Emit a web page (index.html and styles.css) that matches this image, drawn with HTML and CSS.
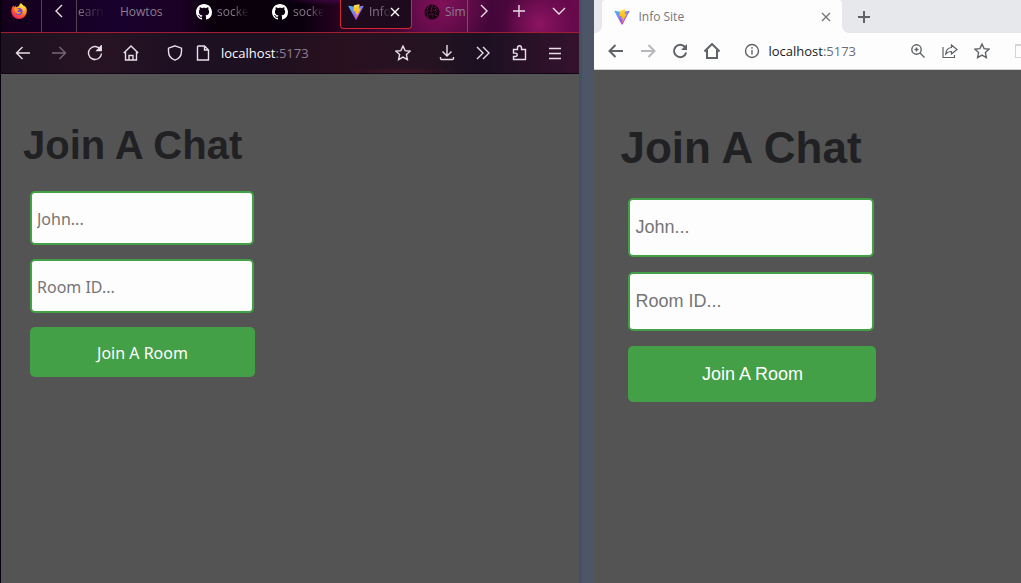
FILE: index.html
```html
<!DOCTYPE html>
<html lang="en">
<head>
<meta charset="utf-8">
<title>Info Site</title>
<link rel="stylesheet" href="styles.css">
</head>
<body>
<svg class="defs" width="0" height="0" aria-hidden="true">
  <defs>
    <linearGradient id="vg" x1="0" y1="0" x2="0.6" y2="1"><stop offset="0" stop-color="#41c0f5"/><stop offset="1" stop-color="#bd34fe"/></linearGradient>
    <linearGradient id="vb" x1="0.4" y1="0" x2="0.6" y2="1"><stop offset="0" stop-color="#ffea83"/><stop offset="0.2" stop-color="#ffcf30"/><stop offset="1" stop-color="#ffa800"/></linearGradient>
    <radialGradient id="ff" cx="0.75" cy="0.15" r="0.95"><stop offset="0" stop-color="#fff04a"/><stop offset="0.45" stop-color="#ff9a20"/><stop offset="0.75" stop-color="#ff4a3c"/><stop offset="1" stop-color="#e5206c"/></radialGradient>
    <symbol id="vite" viewBox="0 0 16 16"><path fill="url(#vg)" d="M.4 2.2 7.6 15.4q.4.6.8 0L15.6 2.2q.2-.6-.5-.5L8 3 .9 1.700q-.7-.1-.5.5z"/><path fill="url(#vb)" d="m11.200.3-5 1q-.3.100-.3.400l-.4 5.400q0 .4.400.300l1.500-.3q.4 0 .3.400l-.4 2q-.1.400.3.300l.9-.3q.4 0 .3.400l-.7 3.200q0 .5.400.1l4.300-8.400q.1-.4-.3-.4l-1.500.3q-.4 0-.3-.4l1-3.600q0-.4-.5-.4z"/></symbol>
    <symbol id="github" viewBox="0 0 16 16"><path fill="currentColor" d="M8 0C3.580 0 0 3.580 0 8c0 3.540 2.290 6.530 5.470 7.590.4.070.55-.17.55-.38 0-.19-.01-.82-.01-1.490-2.010.37-2.530-.49-2.690-.94-.09-.23-.48-.94-.82-1.130-.28-.15-.68-.52-.01-.53.63-.01 1.080.58 1.230.82.72 1.210 1.870.87 2.330.66.070-.52.28-.87.51-1.070-1.780-.2-3.640-.89-3.640-3.950 0-.87.31-1.590.82-2.150-.08-.2-.36-1.020.08-2.120 0 0 .67-.21 2.200.82.64-.18 1.320-.27 2-.27s1.360.09 2 .27c1.530-1.040 2.200-.82 2.200-.82.44 1.100.16 1.920.08 2.120.51.56.82 1.270.82 2.150 0 3.070-1.870 3.750-3.650 3.950.29.25.54.73.54 1.480 0 1.070-.01 1.930-.01 2.200 0 .21.15.46.55.38A8.010 8.010 0 0 0 16 8c0-4.420-3.580-8-8-8z"/></symbol>
    <symbol id="back" viewBox="0 0 16 16"><path d="M15 8H1.500M7.500 2l-6 6 6 6"/></symbol>
    <symbol id="forward" viewBox="0 0 16 16"><path d="M1 8h13.500M8.500 2l6 6-6 6"/></symbol>
    <symbol id="star" viewBox="0 0 16 16"><path d="m8 1 2.100 4.600 5 .6-3.700 3.400 1 5L8 12.100l-4.400 2.500 1-5L.9 6.200l5-.6z"/></symbol>
  </defs>
</svg>

<section class="window firefox">
  <header>
    <div class="ff-tabs">
      <span class="ff-home"><svg class="fill" width="16" height="16" viewBox="0 0 16 16"><path fill="url(#ff)" d="M15.500 5.500C15 4 14 3 13 2.500l.4 1.600C12.500 2 11 1.500 10 0 8.500 1 8 2.300 8 3.300 7 3.300 6 3.800 5.500 4.300 5 4 5 3.300 5 2.700c-.8.300-1.500.9-2 1.500-.4-.5-.4-1.300-.3-2C1.500 3 .3 5.500.2 8.200a7.800 7.800 0 0 0 15.600 0c0-1 0-1.900-.3-2.700z"/><circle cx="8" cy="8.600" r="3.500" fill="#7542e5"/><path fill="#ff9b22" d="M3 5.500c1.300-.6 2.400-.5 3.200.3.900.1 1.800.3 2 .8C7.900 7.300 7 7.200 6.500 7.700c-.3.600.4 1.500 1.900 1.300 1-.1 1.300-.2 1.700.1-.4 1.300-1.800 2-3.200 1.700C4.700 10.300 3 8 3 5.500z"/></svg></span>
      <button class="ff-scroll" aria-label="Scroll left"><svg width="14" height="14" viewBox="0 0 14 14"><path d="M10 1 4 7l6 6"/></svg></button>
      <div class="ff-list">
        <div class="ff-tab partial"><span>earn</span></div>
        <div class="ff-tab"><span>Howtos</span></div>
        <div class="ff-tab"><svg class="fill" width="16" height="16"><use href="#github"/></svg><span class="fade">socke</span></div>
        <div class="ff-tab"><svg class="fill" width="16" height="16"><use href="#github"/></svg><span class="fade">socke</span></div>
        <div class="ff-tab active"><svg class="fill" width="16" height="16"><use href="#vite"/></svg><span class="fade">Info</span><button aria-label="Close tab"><svg width="10" height="10" viewBox="0 0 10 10"><path d="m1 1 8 8M9 1 1 9"/></svg></button></div>
        <div class="ff-tab last"><svg width="16" height="16" viewBox="0 0 16 16"><circle cx="8" cy="8" r="7.500" fill="#16000f" stroke="none"/><path stroke="#5a1440" stroke-width="1" d="M1 5c4-3 8-3 13 1M1 9c4-4 9-4 14 0M3 13c3-4 7-4 10 0M5 1c-3 5-2 9 0 14M9 1c-3 5-2 9 1 14M12 2c-1 4-1 8 1 10" stroke-dasharray="2 1"/></svg><span>Sim</span></div>
      </div>
      <button class="ff-next" aria-label="Scroll right"><svg width="14" height="14" viewBox="0 0 14 14"><path d="m4 1 6 6-6 6"/></svg></button>
      <button class="ff-new" aria-label="New tab"><svg width="14" height="14" viewBox="0 0 14 14"><path d="M7 1v12M1 7h12"/></svg></button>
      <button class="ff-all" aria-label="List all tabs"><svg width="14" height="14" viewBox="0 0 14 14"><path d="m1 4 6 6 6-6"/></svg></button>
    </div>
    <nav class="ff-bar">
      <button aria-label="Back"><svg width="16" height="16"><use href="#back"/></svg></button>
      <button class="dim" aria-label="Forward"><svg width="16" height="16"><use href="#forward"/></svg></button>
      <button aria-label="Reload"><svg width="16" height="16" viewBox="0 0 16 16"><path d="M13.500 4.500A6.500 6.500 0 1 0 14.500 8.500M14.200 1v4.500H10z"/><path d="M14.500 1v5H9.500z" fill="currentColor" stroke="none"/></svg></button>
      <button aria-label="Home"><svg width="16" height="16" viewBox="0 0 16 16"><path d="M.8 8 8 1l7.200 7M2.500 7v8h11V7M6 15v-4.500h4V15"/></svg></button>
      <div class="ff-url">
        <button aria-label="Protection"><svg width="16" height="16" viewBox="0 0 16 16"><path d="m8 .8 6.500 2.400v3C14.500 11 11.500 14 8 15.200 4.500 14 1.500 11 1.500 6.200v-3z"/></svg></button>
        <button aria-label="Site information"><svg width="16" height="16" viewBox="0 0 16 16"><path d="M3.500 1h6l4 4v10h-11V2q0-1 1-1zM9.500 1v4h4"/></svg></button>
        <span class="address">localhost<i>:5173</i></span>
        <button class="end" aria-label="Bookmark"><svg width="16" height="16"><use href="#star"/></svg></button>
      </div>
      <button aria-label="Downloads"><svg width="16" height="16" viewBox="0 0 16 16"><path d="M8 0v10.500M3.500 6.500 8 11l4.500-4.500M1.500 12v1.500q0 1 1 1h11q1 0 1-1V12"/></svg></button>
      <button aria-label="More tools"><svg width="16" height="16" viewBox="0 0 16 16"><path d="m2 2 6 6-6 6M8 2l6 6-6 6"/></svg></button>
      <button aria-label="Extensions"><svg width="16" height="16" viewBox="0 0 16 16"><path d="M2.500 4.500h4V3q0-2.200 2-2.200t2 2.200v1.500h4v10h-12v-3h1.700q2 0 2-1.700t-2-1.700H2.500z"/></svg></button>
      <button aria-label="Menu"><svg width="16" height="16" viewBox="0 0 16 16"><path d="M2 3.500h12M2 8.500h12M2 13.500h12"/></svg></button>
    </nav>
  </header>
  <main>
    <h1>Join A Chat</h1>
    <form>
      <input type="text" placeholder="John..." aria-label="Name">
      <input type="text" placeholder="Room ID..." aria-label="Room ID">
      <button type="button">Join A Room</button>
    </form>
  </main>
</section>

<div class="divider"></div>

<section class="window chrome">
  <header>
    <div class="ch-tabs">
      <div class="ch-tab"><svg width="16" height="16"><use href="#vite"/></svg><span>Info Site</span><button aria-label="Close tab"><svg width="10" height="10" viewBox="0 0 10 10"><path d="m1 1 8 8M9 1 1 9"/></svg></button></div>
      <button class="ch-new" aria-label="New tab"><svg width="14" height="14" viewBox="0 0 14 14"><path d="M7 1v12M1 7h12"/></svg></button>
    </div>
    <nav class="ch-bar">
      <button aria-label="Back"><svg width="16" height="16"><use href="#back"/></svg></button>
      <button class="dim" aria-label="Forward"><svg width="16" height="16"><use href="#forward"/></svg></button>
      <button aria-label="Reload"><svg width="16" height="16" viewBox="0 0 16 16"><path d="M13 4A6.200 6.200 0 1 0 14.200 9.500"/><path d="M15 1v6H9z" fill="currentColor" stroke="none"/></svg></button>
      <button aria-label="Home"><svg width="16" height="16" viewBox="0 0 16 16"><path d="M.5 8.500 8 1l7.500 7.500M3 7v8h10V7"/></svg></button>
      <div class="ch-url">
        <button aria-label="Site information"><svg width="16" height="16" viewBox="0 0 16 16"><circle cx="8" cy="8" r="6.500"/><path d="M8 7v4.500M8 4v1.700"/></svg></button>
        <span class="address">localhost<i>:5173</i></span>
        <button class="end" aria-label="Zoom"><svg width="16" height="16" viewBox="0 0 16 16"><circle cx="6.500" cy="6.500" r="4.700"/><path d="m10 10 4.500 4.500M6.500 4.500v4M4.500 6.500h4"/></svg></button>
        <button aria-label="Share"><svg class="thin" width="16" height="16" viewBox="0 0 16 16"><path d="M1 4v10.500h11.500V12M9.500 2l5.500 4.500-5.500 4.500V8.500Q6 8.300 3.700 11q.5-6 5.800-6.500z"/></svg></button>
        <button aria-label="Bookmark"><svg width="16" height="16"><use href="#star"/></svg></button>
        <span class="panel-edge"></span>
      </div>
    </nav>
  </header>
  <main>
    <h1>Join A Chat</h1>
    <form>
      <input type="text" placeholder="John..." aria-label="Name">
      <input type="text" placeholder="Room ID..." aria-label="Room ID">
      <button type="button">Join A Room</button>
    </form>
  </main>
</section>
</body>
</html>
```
FILE: styles.css
```css
* { box-sizing: border-box; }
body {
  margin: 0;
  min-height: 100vh;
  display: flex;
  background: #545454;
  font-family: "Open Sans", "Noto Sans", sans-serif;
  font-size: 12px;
}
.defs { position: absolute; }
button { border: 0; padding: 0; background: none; color: inherit; font: inherit; }
header button { display: flex; align-items: center; justify-content: center; flex: none; }
svg { display: block; flex: none; fill: none; stroke: currentColor; stroke-width: 1.4; }
svg.fill { stroke: none; }
.window { min-width: 0; }
.address { font-size: 13px; }
.address i { font-style: normal; }
.end { margin-left: auto; }

.firefox { flex: 579; border-left: 1px solid #08000c; }
.firefox header { color: #e8dfe8; }
.ff-tabs {
  display: flex;
  height: 33px;
  border-bottom: 1px solid #a31c31;
  background:
    radial-gradient(ellipse at 445px 34px, #2b0420, transparent 34px),
    radial-gradient(circle at 538px 24px, #8c1461, transparent 36px),
    radial-gradient(circle at 440px 4px, #801058, transparent 50px),
    radial-gradient(ellipse at 335px 0, #3b0640, transparent 55px),
    linear-gradient(90deg, #14001c, #18012c 120px, #1b0123 180px, #09000c 215px, #08000c 300px, #25021f 335px, #560944 430px, #430638 490px, #6a094d 579px);
}
.ff-tabs > button, .ff-home { padding-bottom: 10px; }
.ff-home { display: flex; align-items: center; width: 41px; padding-left: 10px; border-right: 1px solid #51404d; flex: none; }
.ff-scroll { width: 35px; border-right: 1px solid #53424f; }
.ff-list { display: flex; gap: 4px; flex: 1; min-width: 0; overflow: hidden; color: #8d7c92; }
.ff-tab { display: flex; align-items: center; gap: 5px; flex: none; width: 72px; height: 29px; padding: 0 0 5px 7px; border: 1px solid transparent; border-top: 0; white-space: nowrap; }
.ff-tab > svg { color: #fff; }
.ff-tab.partial { width: 31px; padding-left: 0; }
.ff-tab.partial span { color: transparent; background: linear-gradient(90deg, #8d7c92, #2a1538 90%); background-clip: text; }
.ff-tab.active { border-color: #d52730; border-radius: 0 0 4px 4px; background: #1d0a1d; }
.ff-tab.active button { color: #fff; margin-left: -6px; }
.ff-tab.last { width: 50px; }
.fade { color: transparent; background: linear-gradient(90deg, #8d7c92 50%, transparent); background-clip: text; }
.ff-next { width: 32px; border-left: 1px solid #755068; }
.ff-new { width: 40px; }
.ff-all { width: 40px; }
.ff-bar {
  display: flex;
  align-items: center;
  height: 41px;
  padding: 0 6px 0 4px;
  border-bottom: 1px solid #0e0412;
  background:
    radial-gradient(ellipse at 400px 40px, #401626, transparent 60px),
    linear-gradient(90deg, #1d1120, #271323 100px, #1e1022 170px, #1d1020 260px, #29101f 340px, #251322 430px, #1c1021 480px, #35122e 579px);
}
.ff-bar > button { width: 36px; height: 36px; }
.ff-url { display: flex; align-items: center; flex: 1; min-width: 0; padding: 0 12px; }
.ff-url button { width: 28px; height: 28px; }
.ff-bar .dim { color: #75677a; }
.ff-url .address { margin-left: 4px; color: #fbfbfe; }
.ff-url i { color: #8f8090; }

.divider { width: 15px; flex: none; background: #4c5666; border-left: 3px solid #445162; }

.chrome { flex: 427; overflow: hidden; color: #5f6368; }
.ch-tabs { display: flex; height: 33px; background: #e7e8ec; padding-left: 8px; }
.ch-tab { position: relative; display: flex; align-items: center; width: 240px; padding: 0 11px 0 12px; gap: 8px; background: #fdfdfd; border-radius: 4px 4px 0 0; flex: none; color: #74777b; }
.ch-tab > svg { stroke: none; }
.ch-tab::before, .ch-tab::after { content: ""; position: absolute; bottom: 0; width: 8px; height: 8px; }
.ch-tab::before { right: 100%; background: radial-gradient(circle at 0 0, transparent 8px, #fdfdfd 8px); }
.ch-tab::after { left: 100%; background: radial-gradient(circle at 100% 0, transparent 8px, #fdfdfd 8px); }
.ch-tab button { margin-left: auto; }
.ch-new { width: 28px; margin-left: 8px; }
.ch-new svg { stroke-width: 2; }
.ch-bar { display: flex; align-items: center; height: 37px; padding-left: 6px; border-bottom: 1px solid #d0d0d0; background: #fdfdfd; }
.ch-bar button { width: 32px; height: 32px; }
.ch-bar > button svg { stroke-width: 2; }
.ch-bar .dim { color: #b5b7ba; }
.ch-url { display: flex; align-items: center; flex: 1; min-width: 0; padding-left: 8px; }
.ch-url .address { color: #202124; }
.ch-url i { color: #6b6f74; }
.ch-bar svg.thin { stroke-width: 1.2; }
.panel-edge { width: 6px; height: 14px; margin-left: 17px; border: 1px solid #d5d5d5; border-top-width: 2px; border-right: 0; }

main { padding: 47px 22px; }
h1 { margin: 0 0 22px; color: #212124; font: bold 40px/48px "Liberation Sans", Arial, sans-serif; }
form { display: flex; flex-direction: column; align-items: flex-start; padding-left: 7px; }
form input { width: 224px; height: 54px; margin-bottom: 14px; padding: 2px 5px 0; border: 2px solid #43a047; border-radius: 5px; background: #fdfdfd; font: 16px "Noto Sans", sans-serif; }
form input::placeholder { color: #757575; opacity: 1; }
form button { width: 225px; height: 50px; padding-top: 2px; border-radius: 5px; background: #43a047; color: #fff; font: 16px "Noto Sans", sans-serif; }
.chrome main { padding: 52px 26px; }
.chrome h1 { margin-bottom: 24px; font-size: 44px; line-height: 52px; }
.chrome form { padding-left: 8px; }
.chrome form input { width: 246px; height: 59px; margin-bottom: 15px; padding: 0 5px; font: 18px "Liberation Sans", Arial, sans-serif; }
.chrome form button { width: 248px; height: 56px; padding: 0; font: 18px "Liberation Sans", Arial, sans-serif; }
```
